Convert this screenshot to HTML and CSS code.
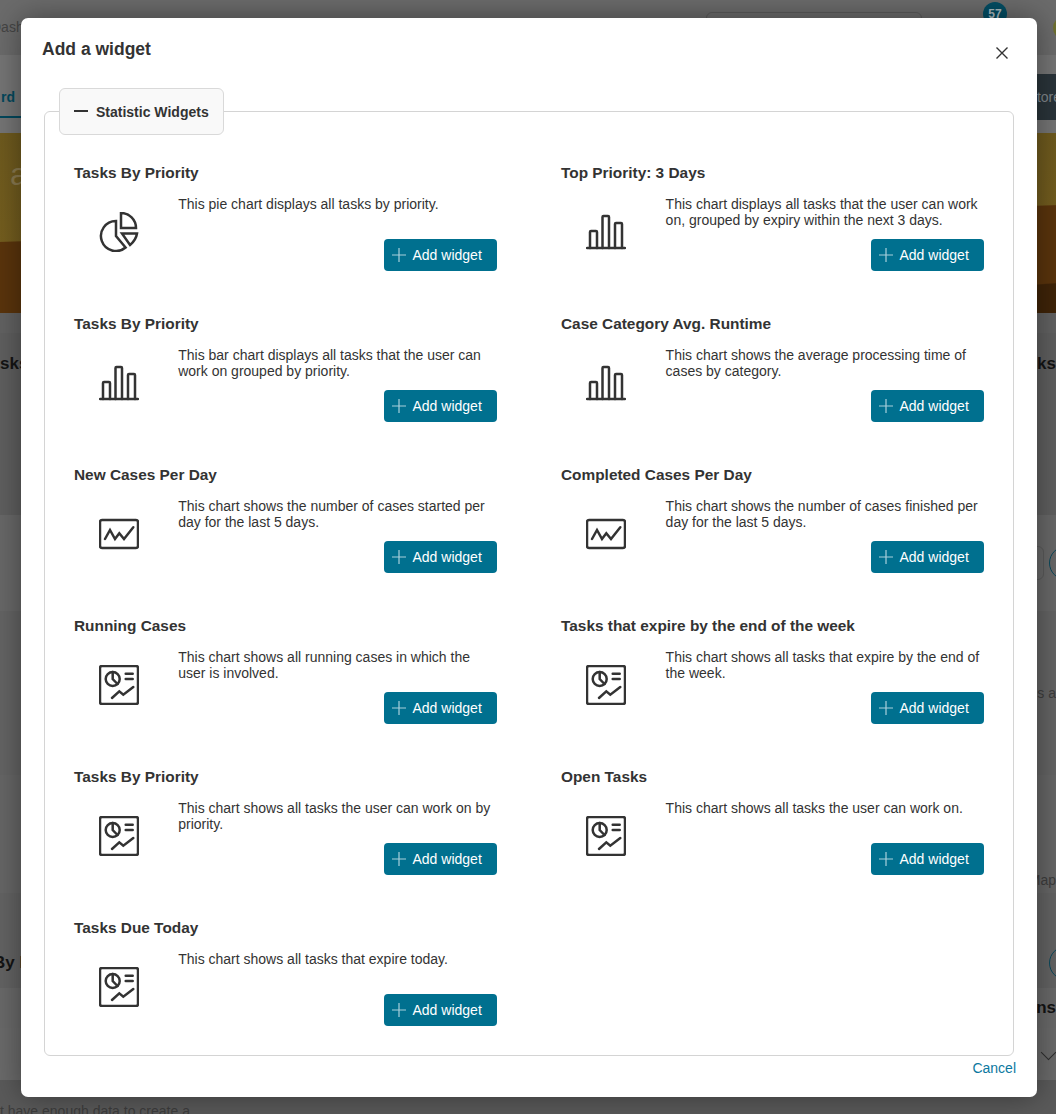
FILE: index.html
```html
<!DOCTYPE html>
<html lang="en">
<head>
    <meta charset="UTF-8">
    <title>Add a widget</title>
    <link rel="stylesheet" href="styles.css">
</head>
<body>
    <svg class="icon-defs" width="0" height="0">
        <symbol id="i-pie" viewBox="0 0 40 40">
            <path d="M17 9A15 15 0 1 0 26.6 35.5L17 24Z"/>
            <path d="M22 1A15 15 0 0 1 37 16H22Z"/>
            <path d="M23 21.500H38Q37 28 31 33Z"/>
        </symbol>
        <symbol id="i-bar" viewBox="0 0 40 40">
            <path d="M1 36H39"/>
            <path d="M4 36V20Q4 19 5 19H10Q11 19 11 20V36"/>
            <path d="M16.500 36V5Q16.500 4 17.500 4H22Q23 4 23 5V36"/>
            <path d="M29 36V12Q29 11 30 11H35Q36 11 36 12V36"/>
        </symbol>
        <symbol id="i-line" viewBox="0 0 40 40">
            <rect x="1" y="6" width="38" height="28" rx="2"/>
            <path d="M6 25L11 16L16 25L20.300 19.300L25 25L34.300 13.300"/>
        </symbol>
        <symbol id="i-report" viewBox="0 0 40 40">
            <rect x="1" y="1" width="38" height="38" rx="2"/>
            <circle cx="13.700" cy="14" r="7"/>
            <path d="M13.700 7V14L18.500 19"/>
            <path d="M26.700 8.700H33.700M26.700 14H33.700"/>
            <path d="M13 33L20.300 26.300L24.300 29.700L34.300 22"/>
        </symbol>
        <symbol id="i-plus" viewBox="0 0 14 14">
            <path d="M7 0V14M0 7H14"/>
        </symbol>
    </svg>

    <!-- page behind the dialog -->
    <div class="app">
        <div class="topbar">
            <span class="crumb">Dash</span>
            <div class="topbar-right">
                <div class="search"></div>
                <span class="badge">57</span>
                <span class="avatar"></span>
            </div>
        </div>
        <div class="tabs">
            <span class="tab">rd</span>
            <span class="store-btn">Restore</span>
        </div>
        <div class="hero"><span class="hero-text">l a</span></div>
        <div class="band-row"></div>
        <div class="heading-row">
            <span class="bg-title">sks</span>
            <span class="bg-title">sks</span>
        </div>
        <div class="panel-row panel-a">
            <span></span>
            <div class="tools"><span class="pill"></span><span class="ring"></span></div>
        </div>
        <div class="panel-row panel-b"><span></span><span class="bg-text">es a</span></div>
        <div class="panel-row panel-c"><span></span><span class="bg-text">Map</span></div>
        <div class="panel-row panel-d">
            <span class="bg-title by">By P</span>
            <span class="ring"></span>
        </div>
        <div class="panel-row panel-e"><span></span><span class="bg-title">ns</span></div>
        <div class="panel-row panel-f"><span></span><span class="chev"></span></div>
        <div class="panel-row panel-g"><span class="bg-text">t have enough data to create a</span></div>
    </div>

    <div class="modal">
        <div class="modal-head">
            <h2>Add a widget</h2>
            <button class="close" aria-label="Close">
                <svg width="12" height="12" viewBox="0 0 12 12"><path d="M0.500 0.500L11.500 11.500M11.500 0.500L0.500 11.500"/></svg>
            </button>
        </div>

        <fieldset class="group">
            <legend><span class="minus"></span>Statistic Widgets</legend>
            <div class="widget-grid">
                <div class="widget">
                    <h3>Tasks By Priority</h3>
                    <svg class="w-icon"><use href="#i-pie"/></svg>
                    <div class="w-body">
                        <p>This pie chart displays all tasks by priority.</p>
                        <button class="add"><svg class="plus"><use href="#i-plus"/></svg>Add widget</button>
                    </div>
                </div>
                <div class="widget">
                    <h3>Top Priority: 3 Days</h3>
                    <svg class="w-icon"><use href="#i-bar"/></svg>
                    <div class="w-body">
                        <p>This chart displays all tasks that the user can work on, grouped by expiry within the next 3 days.</p>
                        <button class="add"><svg class="plus"><use href="#i-plus"/></svg>Add widget</button>
                    </div>
                </div>
                <div class="widget">
                    <h3>Tasks By Priority</h3>
                    <svg class="w-icon"><use href="#i-bar"/></svg>
                    <div class="w-body">
                        <p>This bar chart displays all tasks that the user can work on grouped by priority.</p>
                        <button class="add"><svg class="plus"><use href="#i-plus"/></svg>Add widget</button>
                    </div>
                </div>
                <div class="widget">
                    <h3>Case Category Avg. Runtime</h3>
                    <svg class="w-icon"><use href="#i-bar"/></svg>
                    <div class="w-body">
                        <p>This chart shows the average processing time of cases by category.</p>
                        <button class="add"><svg class="plus"><use href="#i-plus"/></svg>Add widget</button>
                    </div>
                </div>
                <div class="widget">
                    <h3>New Cases Per Day</h3>
                    <svg class="w-icon"><use href="#i-line"/></svg>
                    <div class="w-body">
                        <p>This chart shows the number of cases started per day for the last 5 days.</p>
                        <button class="add"><svg class="plus"><use href="#i-plus"/></svg>Add widget</button>
                    </div>
                </div>
                <div class="widget">
                    <h3>Completed Cases Per Day</h3>
                    <svg class="w-icon"><use href="#i-line"/></svg>
                    <div class="w-body">
                        <p>This chart shows the number of cases finished per day for the last 5 days.</p>
                        <button class="add"><svg class="plus"><use href="#i-plus"/></svg>Add widget</button>
                    </div>
                </div>
                <div class="widget">
                    <h3>Running Cases</h3>
                    <svg class="w-icon"><use href="#i-report"/></svg>
                    <div class="w-body">
                        <p>This chart shows all running cases in which the user is involved.</p>
                        <button class="add"><svg class="plus"><use href="#i-plus"/></svg>Add widget</button>
                    </div>
                </div>
                <div class="widget">
                    <h3>Tasks that expire by the end of the week</h3>
                    <svg class="w-icon"><use href="#i-report"/></svg>
                    <div class="w-body">
                        <p>This chart shows all tasks that expire by the end of the week.</p>
                        <button class="add"><svg class="plus"><use href="#i-plus"/></svg>Add widget</button>
                    </div>
                </div>
                <div class="widget">
                    <h3>Tasks By Priority</h3>
                    <svg class="w-icon"><use href="#i-report"/></svg>
                    <div class="w-body">
                        <p>This chart shows all tasks the user can work on by priority.</p>
                        <button class="add"><svg class="plus"><use href="#i-plus"/></svg>Add widget</button>
                    </div>
                </div>
                <div class="widget">
                    <h3>Open Tasks</h3>
                    <svg class="w-icon"><use href="#i-report"/></svg>
                    <div class="w-body">
                        <p>This chart shows all tasks the user can work on.</p>
                        <button class="add"><svg class="plus"><use href="#i-plus"/></svg>Add widget</button>
                    </div>
                </div>
                <div class="widget">
                    <h3>Tasks Due Today</h3>
                    <svg class="w-icon"><use href="#i-report"/></svg>
                    <div class="w-body">
                        <p>This chart shows all tasks that expire today.</p>
                        <button class="add"><svg class="plus"><use href="#i-plus"/></svg>Add widget</button>
                    </div>
                </div>
            </div>
        </fieldset>

        <div class="modal-foot"><a class="cancel" href="#">Cancel</a></div>
    </div>
</body>
</html>
```

FILE: styles.css
```css
body {
    margin: 0;
    height: 1114px;
    overflow: hidden;
    position: relative;
    background: #5f5f5f;
    color: #333;
    font-family: "Liberation Sans", Arial, sans-serif;
    font-size: 14px;
}
.icon-defs {
    position: absolute;
}

/* dimmed page behind the dialog */
.app {
    height: 1114px;
    overflow: hidden;
    display: flex;
    flex-direction: column;
}
.topbar {
    height: 55px;
    flex: none;
    background: #6b6b6b;
    display: flex;
    justify-content: space-between;
    align-items: flex-start;
    overflow: hidden;
}
.crumb {
    margin: 19px 0 0 -9px;
    color: #454545;
}
.topbar-right {
    display: flex;
    align-items: flex-start;
}
.search {
    width: 214px;
    height: 50px;
    margin-top: 12px;
    border: 1px solid #5a5a5a;
    border-radius: 6px;
}
.badge {
    width: 24px;
    height: 24px;
    margin: 2px 0 0 61px;
    border-radius: 50%;
    background: #034d63;
    color: #a9b8bd;
    font-size: 12px;
    font-weight: bold;
    line-height: 24px;
    text-align: center;
}
.avatar {
    width: 24px;
    height: 24px;
    margin: 16px -21px 0 46px;
    border-radius: 50%;
    background: #6e7030;
}
.tabs {
    height: 78px;
    flex: none;
    background: #757575;
    display: flex;
    justify-content: space-between;
    align-items: flex-start;
    overflow: hidden;
}
.tab {
    width: 21px;
    height: 28px;
    margin-top: 19px;
    padding-top: 14px;
    line-height: 18px;
    text-indent: 1px;
    border-bottom: 2px solid #03485c;
    color: #03485c;
    font-weight: bold;
    white-space: nowrap;
}
.store-btn {
    width: 46px;
    height: 46px;
    margin: 19px -27px 0 0;
    background: #2a343a;
    color: #80878b;
    line-height: 46px;
    text-indent: -25px;
    white-space: nowrap;
    overflow: hidden;
}
.hero {
    height: 180px;
    flex: none;
    background:
        linear-gradient(176deg, transparent 0 88%, #3f2408 88.5%),
        linear-gradient(178deg, transparent 0 50%, #5a340c 50.5%),
        linear-gradient(180deg, #6e5a1e, #78601f);
}
.hero-text {
    display: block;
    margin: 23px 0 0 -6px;
    color: #8a7a50;
    font-size: 32px;
    line-height: 36px;
}
.band-row {
    height: 20px;
    flex: none;
    background: #626262;
}
.heading-row {
    height: 182px;
    flex: none;
    padding-top: 21px;
    box-sizing: border-box;
    display: flex;
    justify-content: space-between;
}
.bg-title {
    height: 20px;
    color: #141414;
    font-size: 17px;
    font-weight: bold;
    line-height: 20px;
}
.bg-text {
    color: #3d3d3d;
    white-space: nowrap;
}
.panel-row {
    flex: none;
    box-sizing: border-box;
    display: flex;
    justify-content: space-between;
    align-items: center;
    overflow: hidden;
}
.tools {
    display: flex;
}
.pill {
    width: 20px;
    height: 32px;
    margin-right: 5px;
    border: 1px solid #5a5a5a;
    border-radius: 6px;
}
.ring {
    width: 32px;
    height: 32px;
    margin-right: -27px;
    border: 1px solid #08485c;
    border-radius: 50%;
}
.panel-a { height: 96px; background: #686868; }
.panel-b { height: 164px; background: #646464; }
.panel-c { height: 118px; background: #666; align-items: flex-end; padding-bottom: 5px; }
.panel-d { height: 95px; background: #636363; padding-top: 45px; }
.panel-e { height: 40px; background: #696969; }
.panel-f { height: 52px; background: #6a6a6a; }
.panel-g { flex: 1; align-items: flex-end; background: #5a5a5a; }
.panel-g .bg-text { margin-bottom: -5px; }
.by { margin-left: -7px; }
.chev {
    width: 10px;
    height: 10px;
    margin: 0 2px 4px 0;
    border-right: 1px solid #2e2e2e;
    border-bottom: 1px solid #2e2e2e;
    transform: rotate(45deg);
}

/* dialog */
.modal {
    position: absolute;
    left: 21px;
    top: 18px;
    width: 1016px;
    height: 1079px;
    box-sizing: border-box;
    padding: 0 23px;
    background: #fff;
    border-radius: 7px;
    box-shadow: 0 0 30px rgba(0, 0, 0, 0.4);
}
.modal-head {
    height: 70px;
    display: flex;
    justify-content: space-between;
    align-items: flex-start;
    margin-left: -2px;
}
.modal-head h2 {
    margin: 20px 0 0;
    font-size: 17.500px;
    line-height: 22px;
    color: #333;
}
.close {
    margin: 29px 6px 0 0;
    padding: 0;
    border: 0;
    background: none;
    line-height: 0;
}
.close path {
    fill: none;
    stroke: #333;
    stroke-width: 1.4;
}
.group {
    margin: 0;
    padding: 30px 29px 29px;
    border: 1px solid #d4d4d4;
    border-radius: 6px;
    min-width: 0;
}
.group legend {
    height: 47px;
    box-sizing: border-box;
    margin-left: -15px;
    padding: 0 14px;
    display: flex;
    align-items: center;
    background: #f9f9f9;
    border: 1px solid #d9d9d9;
    border-radius: 6px;
    font-weight: bold;
    color: #333;
}
.minus {
    width: 14px;
    height: 2px;
    margin-right: 8px;
    background: #333;
    position: relative;
    top: -1px;
}
.widget-grid {
    display: grid;
    grid-template-columns: 423px 423px;
    column-gap: 64px;
    row-gap: 45px;
}
.widget {
    display: grid;
    grid-template-columns: 104.200px 1fr;
}
.widget:nth-child(even) {
    grid-template-columns: 104.600px 1fr;
}
.widget h3 {
    grid-column: 1 / 3;
    margin: 0 0 15px;
    font-size: 15.400px;
    line-height: 16px;
    color: #333;
}
.w-icon {
    width: 40px;
    height: 40px;
    margin: 16px 0 0 25px;
    fill: none;
    stroke: #333;
    stroke-width: 2.500;
    stroke-linecap: round;
}
.w-body p {
    height: 43px;
    margin: 0;
    line-height: 16px;
    color: #333;
}
.w-body {
    display: flex;
    flex-direction: column;
}
.add {
    align-self: flex-end;
    width: 113px;
    height: 32px;
    padding: 0 0 0 8px;
    display: flex;
    align-items: center;
    border: 0;
    border-radius: 4px;
    background: #00708f;
    color: #fff;
    font: 14px "Liberation Sans", Arial, sans-serif;
}
.plus {
    width: 14px;
    height: 14px;
    margin-right: 6.500px;
    fill: none;
    stroke: #a8d0dc;
    stroke-width: 1.2;
}
.modal-foot {
    text-align: right;
    margin: 3px -2px 0 0;
    line-height: 18px;
}
.cancel {
    color: #0b78a0;
    text-decoration: none;
}
```
